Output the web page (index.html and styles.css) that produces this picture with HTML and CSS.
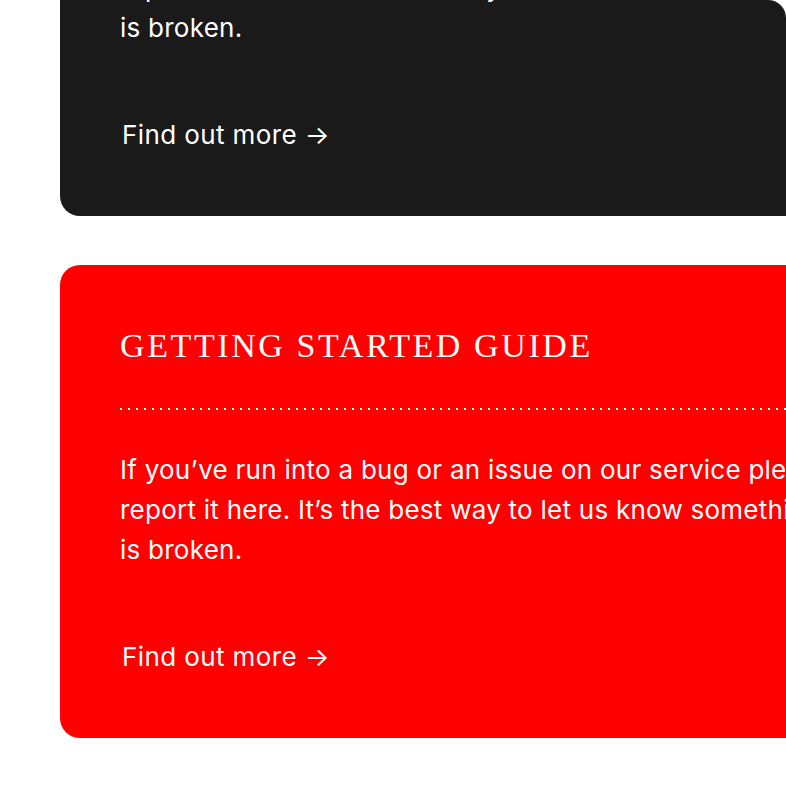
FILE: index.html
```html
<!DOCTYPE html>
<html lang="en">
<head>
    <meta charset="UTF-8">
    <meta name="viewport" content="width=device-width, initial-scale=1.0">
    <title>Help cards</title>
    <link rel="stylesheet" href="styles.css">
</head>
<body>
    <!-- Cards track (scrolled part of the page) -->
    <div class="track">
        <div class="card card-dark">
            <h2 class="card-title">REPORT A PROBLEM</h2>
            <div class="rule"></div>
            <p class="card-text">If you’ve run into a bug or an issue on our service please report it here. It’s the best way to let us know something is broken.</p>
            <a class="card-link" href="#">Find out more →</a>
        </div>

        <div class="card card-red">
            <h2 class="card-title">GETTING STARTED GUIDE</h2>
            <div class="rule"></div>
            <p class="card-text">If you’ve run into a bug or an issue on our service please report it here. It’s the best way to let us know something is broken.</p>
            <a class="card-link" href="#">Find out more →</a>
        </div>
    </div>
</body>
</html>
```

FILE: styles.css
```css
/* Reset CSS */
* {
    margin: 0;
    padding: 0;
    box-sizing: border-box;
}

body {
    font-family: 'Inter', 'Liberation Sans', sans-serif;
    background: #fff;
    color: #fff;
    overflow: hidden;
}

/* Track */
.track {
    display: flex;
    flex-direction: column;
    gap: 49px;
    padding-left: 60px;
    padding-bottom: 49px;
    overflow: hidden;
    border-top-right-radius: 18px;
}

/* Card Styles */
.card {
    flex-shrink: 0;
    width: 835px;
    padding: 61px 60px 61px;
    border-radius: 20px;
}

.card-dark {
    background: #1a1a1a;
    margin-top: -257px;
}

.card-red {
    background: #ff0000;
}

.card-title {
    font-family: 'Liberation Serif', serif;
    font-weight: normal;
    font-size: 34px;
    line-height: 40px;
    letter-spacing: 2.6px;
    margin-bottom: 42px;
}

.rule {
    height: 2px;
    background-image: linear-gradient(to right, #fff 2px, transparent 2px);
    background-size: 8px 2px;
    margin-bottom: 40px;
}

.card-text {
    font-size: 26px;
    line-height: 40px;
    letter-spacing: 0.25px;
}

.card-link {
    display: inline-block;
    margin-top: 67px;
    margin-left: 2px;
    font-size: 26px;
    line-height: 40px;
    letter-spacing: 0.4px;
    color: #fff;
    text-decoration: none;
}
```
